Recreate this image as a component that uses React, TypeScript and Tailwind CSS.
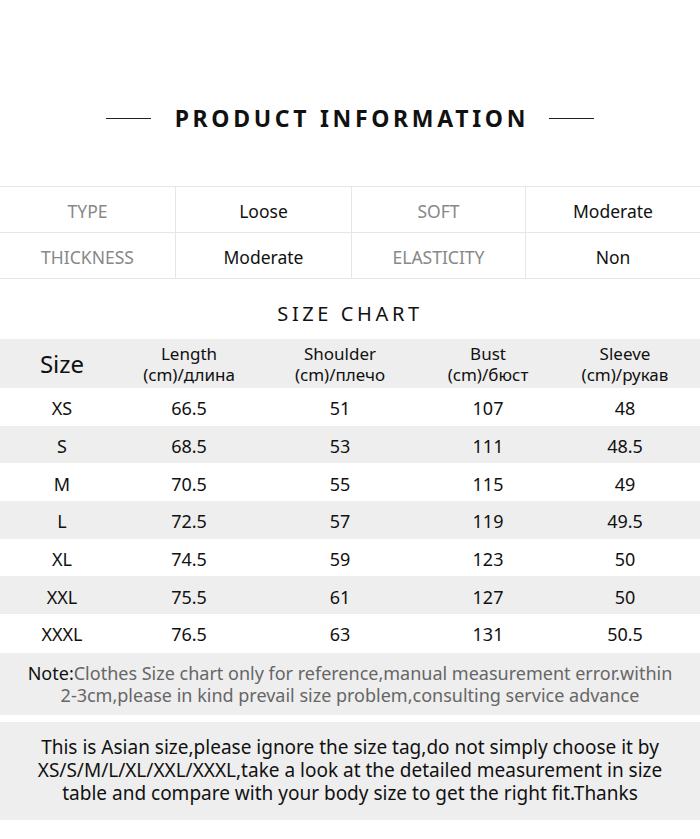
const info = [
  ['TYPE', 'Loose', 'SOFT', 'Moderate'],
  ['THICKNESS', 'Moderate', 'ELASTICITY', 'Non'],
]

const sizes = [
  ['XS', '66.5', '51', '107', '48'],
  ['S', '68.5', '53', '111', '48.5'],
  ['M', '70.5', '55', '115', '49'],
  ['L', '72.5', '57', '119', '49.5'],
  ['XL', '74.5', '59', '123', '50'],
  ['XXL', '75.5', '61', '127', '50'],
  ['XXXL', '76.5', '63', '131', '50.5'],
]

const cols = 'grid grid-cols-[124px_130px_172px_124px_150px]'

export default function App() {
  return (
    <div className="w-[700px] h-[839px] bg-white font-['Noto_Sans',sans-serif] text-[#111]">
      <div className="flex h-[186px] items-start justify-center pt-[102px]">
        <div className="flex items-center gap-[24px]">
          <div className="h-px w-[45px] bg-[#222]" />
          <h1 className="mr-[-0.16em] text-[23px] font-bold leading-[32px] tracking-[0.16em]">PRODUCT INFORMATION</h1>
          <div className="h-px w-[45px] bg-[#222]" />
        </div>
      </div>

      <div className="border-t border-[#e6e6e6]">
        {info.map((row, i) => (
          <div key={i} className="grid h-[46px] grid-cols-[175px_176px_174px_175px] border-b border-[#e6e6e6] text-[17.5px]">
            {row.map((cell, j) => (
              <div
                key={j}
                className={`flex items-center justify-center pt-[4px] ${j > 0 ? 'border-l border-[#e6e6e6]' : ''} ${j % 2 === 0 ? 'text-[#888]' : 'text-[#111]'}`}
              >
                {cell}
              </div>
            ))}
          </div>
        ))}
      </div>

      <h2 className="mt-[22px] mb-[12px] text-center text-[20px] leading-[26px] tracking-[0.18em]">SIZE CHART</h2>

      <div className={`${cols} h-[49px] items-center bg-[#eeeeee] text-center text-[17px] leading-[21px]`}>
        <div className="text-[24px]">Size</div>
        <div>Length<br />(cm)/длина</div>
        <div>Shoulder<br />(cm)/плечо</div>
        <div>Bust<br />(cm)/бюст</div>
        <div>Sleeve<br />(cm)/рукав</div>
      </div>
      {sizes.map((row, i) => (
        <div key={row[0]} className={`${cols} h-[37.7px] items-center pt-[4px] text-center text-[18px] ${i % 2 === 1 ? 'bg-[#eeeeee]' : ''}`}>
          {row.map((cell, j) => (
            <div key={j}>{cell}</div>
          ))}
        </div>
      ))}

      <div className="mt-px flex h-[62px] flex-col items-center justify-center bg-[#eeeeee] text-center text-[18px] leading-[22px] text-[#666]">
        <p><span className="text-[#111]">Note:</span>Clothes Size chart only for reference,manual measurement error.within</p>
        <p>2-3cm,please in kind prevail size problem,consulting service advance</p>
      </div>

      <div className="mt-[7px] flex h-[98px] flex-col items-center justify-center bg-[#eeeeee] text-center text-[19px] leading-[23px]">
        <p>This is Asian size,please ignore the size tag,do not simply choose it by</p>
        <p>XS/S/M/L/XL/XXL/XXXL,take a look at the detailed measurement in size</p>
        <p>table and compare with your body size to get the right fit.Thanks</p>
      </div>
    </div>
  )
}
